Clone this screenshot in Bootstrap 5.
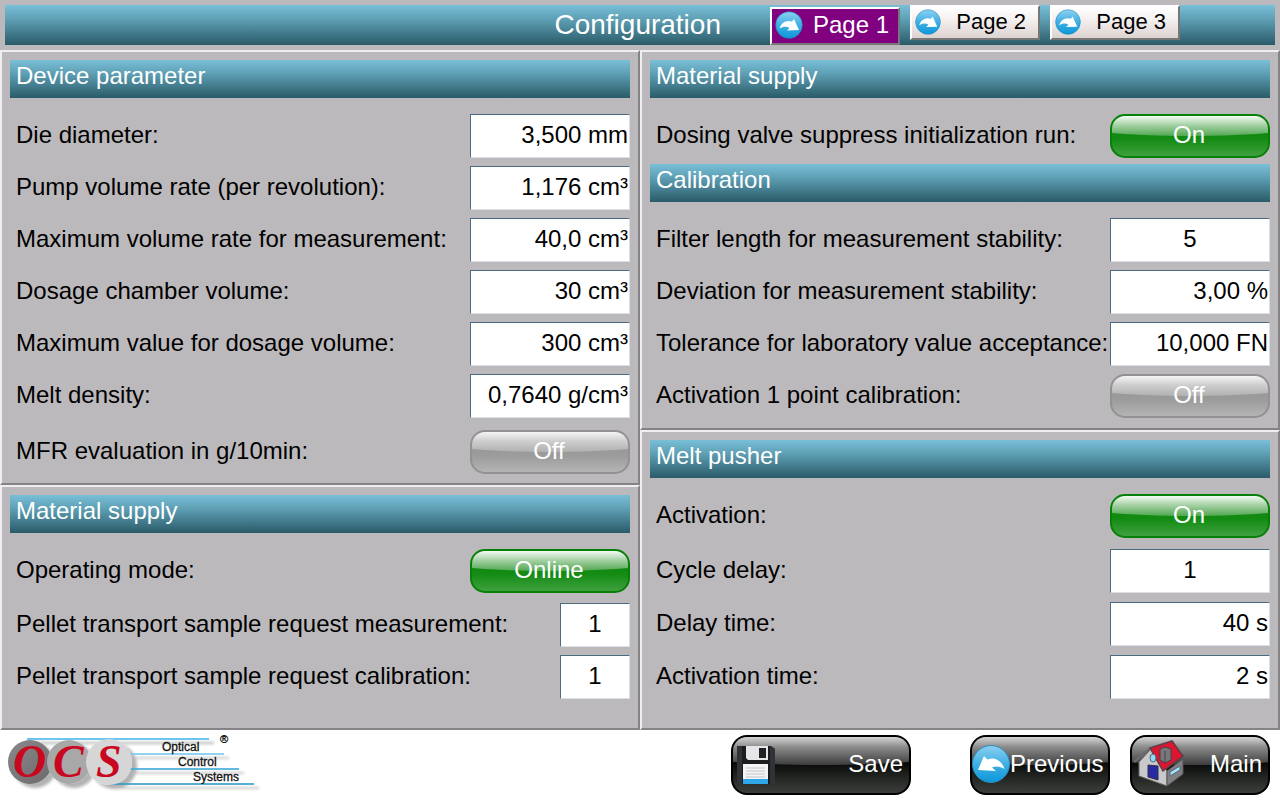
<!DOCTYPE html>
<html lang="en">
<head>
<meta charset="utf-8">
<meta name="viewport" content="width=device-width, initial-scale=1">
<title>Configuration</title>
<link href="https://cdn.jsdelivr.net/npm/bootstrap@5.3.0/dist/css/bootstrap.min.css" rel="stylesheet">
<style>
  body { font-family: "Liberation Sans", Arial, sans-serif; font-size: 24px; line-height: 28px; color: #000; background: #fff; }
  .hmi-top { background: #bcb9bc; padding: 5px 5px 5px; }
  .hmi-bar, .section-bar { background: linear-gradient(#78bfd8, #5fa0b5 35%, #2a5b69); color: #fff; }
  .hmi-bar { height: 40px; gap: 10px; padding-right: 95px; }
  .hmi-title { font-size: 28px; line-height: 40px; margin: 0 39px 0 0; font-weight: 400; }
  .tab-btn { width: 130px; height: 35px; padding: 0 12px 2px 3px; font-size: 22px; line-height: 28px; color: #000; background: linear-gradient(#fff, #f4f0ef 40%, #dcd3d0); border: 2px solid; border-color: #fff #777 #777 #fff; }
  .tab-btn svg { width: 26px; height: 26px; }
  .tab-btn.current { height: 38px; margin-top: 2px; padding-right: 9px; font-size: 24px; color: #fff; background: #800080; }
  .tab-btn.current svg { width: 28px; height: 28px; }
  .hmi-panel { background: #bcb9bc; border: 2px solid; border-color: #f0eef0 #858385 #858385 #f0eef0; padding: 8px 8px 9px; }
  .hmi-panel.tall { padding-bottom: 10px; }
  .section-bar { height: 38px; font-size: 24px; line-height: 32px; padding-left: 6px; margin: 0; font-weight: 400; }
  .section-bar.calib { margin-top: 6px; }
  .param-rows { display: grid; gap: 8px; padding-top: 16px; }
  .param-rows.roomy { gap: 9px; }
  .param { display: flex; align-items: center; justify-content: space-between; height: 44px; }
  .param label { padding: 0 0 2px 6px; white-space: nowrap; }
  .param.after-fields { margin-top: 4px; }
  .param.before-fields { margin-bottom: 2px; }
  .num { width: 160px; height: 44px; flex: none; padding: 0 1px 2px; background: #fff; color: #000; border: 1px solid; border-color: #4c6b82 #dcdfe6 #dcdfe6 #4c6b82; border-radius: 0; text-align: right; }
  .num.short { width: 70px; }
  .num.mid { text-align: center; }
  .glossy { position: relative; isolation: isolate; overflow: hidden; display: flex; align-items: center; color: #fff; flex: none; }
  .glossy::before { content: ""; position: absolute; z-index: -1; inset: 0 -40px auto; height: 50%; border-radius: 0 0 50% 50% / 0 0 12px 12px; }
  .toggle { width: 160px; height: 44px; justify-content: center; padding: 0 2px 2px 0; border: 2px solid #068006; border-radius: 15px; background: linear-gradient(#128a12 45%, #148c14 58%, #3fa03f); }
  .toggle::before { background: linear-gradient(#f4fbf4, #aed6ae 40%, #52a752); }
  .toggle.off { border-color: #929292; background: linear-gradient(#999 45%, #9c9c9c 60%, #b4b4b4); }
  .toggle.off::before { background: linear-gradient(#f6f4f6, #cfcecf 45%, #b0b0b0); }
  .foot { padding: 5px 10px 5px 0; min-height: 70px; }
  .foot-buttons { gap: 20px; }
  .cmd { width: 140px; height: 60px; justify-content: space-between; padding: 0 6px 2px 0; border: 2px solid #000; border-radius: 16px; background: linear-gradient(#0c0e0c 50%, #1c1e1c 65%, #3b3e3b); }
  .cmd::before { background: linear-gradient(#d6d6d6, #8d8d8d 35%, #3c3c3c); }
  .cmd.wide { width: 180px; margin-right: 39px; }
  .cmd svg { flex: none; }
  .ocs-logo { overflow: visible; }
</style>
</head>
<body>
<svg width="0" height="0" class="position-absolute" aria-hidden="true">
  <defs>
    <linearGradient id="blue" x1="0" y1="0" x2="0" y2="1"><stop offset="0" stop-color="#8bd0f0"/><stop offset=".5" stop-color="#3fb0e4"/><stop offset="1" stop-color="#0c97da"/></linearGradient>
    <symbol id="forward" viewBox="0 0 28 28">
      <circle cx="14" cy="14" r="13.3" fill="url(#blue)" stroke="#2287b8" stroke-width=".6"/>
      <path d="M4.500 17.500C6 12 11 8.500 17 10.500L19 8 24 19 12 19.500 14.500 17C11.500 15 8 15.500 4.500 17.500z" fill="#fff"/>
    </symbol>
  </defs>
</svg>
<div class="d-flex flex-column min-vh-100">
  <header class="hmi-top">
    <div class="hmi-bar d-flex justify-content-end align-items-start">
      <h1 class="hmi-title">Configuration</h1>
      <button type="button" class="tab-btn current d-flex align-items-center justify-content-between"><svg aria-hidden="true"><use href="#forward"/></svg>Page 1</button>
      <button type="button" class="tab-btn d-flex align-items-center justify-content-between"><svg aria-hidden="true"><use href="#forward"/></svg>Page 2</button>
      <button type="button" class="tab-btn d-flex align-items-center justify-content-between"><svg aria-hidden="true"><use href="#forward"/></svg>Page 3</button>
    </div>
  </header>

  <main class="row g-0 flex-grow-1">
    <div class="col-6 d-flex flex-column">
      <section class="hmi-panel">
        <h2 class="section-bar">Device parameter</h2>
        <div class="param-rows">
          <div class="param"><label for="die">Die diameter:</label><input id="die" class="num" type="text" value="3,500 mm"></div>
          <div class="param"><label for="pump">Pump volume rate (per revolution):</label><input id="pump" class="num" type="text" value="1,176 cm³"></div>
          <div class="param"><label for="maxrate">Maximum volume rate for measurement:</label><input id="maxrate" class="num" type="text" value="40,0 cm³"></div>
          <div class="param"><label for="chamber">Dosage chamber volume:</label><input id="chamber" class="num" type="text" value="30 cm³"></div>
          <div class="param"><label for="maxdose">Maximum value for dosage volume:</label><input id="maxdose" class="num" type="text" value="300 cm³"></div>
          <div class="param"><label for="density">Melt density:</label><input id="density" class="num" type="text" value="0,7640 g/cm³"></div>
          <div class="param after-fields"><label for="mfr">MFR evaluation in g/10min:</label><button id="mfr" type="button" class="glossy toggle off">Off</button></div>
        </div>
      </section>
      <section class="hmi-panel flex-grow-1">
        <h2 class="section-bar">Material supply</h2>
        <div class="param-rows">
          <div class="param before-fields"><label for="mode">Operating mode:</label><button id="mode" type="button" class="glossy toggle">Online</button></div>
          <div class="param"><label for="reqmeas">Pellet transport sample request measurement:</label><input id="reqmeas" class="num short mid" type="text" value="1"></div>
          <div class="param"><label for="reqcal">Pellet transport sample request calibration:</label><input id="reqcal" class="num short mid" type="text" value="1"></div>
        </div>
      </section>
    </div>
    <div class="col-6 d-flex flex-column">
      <section class="hmi-panel tall">
        <h2 class="section-bar">Material supply</h2>
        <div class="param-rows">
          <div class="param"><label for="dosing">Dosing valve suppress initialization run:</label><button id="dosing" type="button" class="glossy toggle">On</button></div>
        </div>
        <h2 class="section-bar calib">Calibration</h2>
        <div class="param-rows">
          <div class="param"><label for="filter">Filter length for measurement stability:</label><input id="filter" class="num mid" type="text" value="5"></div>
          <div class="param"><label for="deviation">Deviation for measurement stability:</label><input id="deviation" class="num" type="text" value="3,00 %"></div>
          <div class="param"><label for="tolerance">Tolerance for laboratory value acceptance:</label><input id="tolerance" class="num" type="text" value="10,000 FN"></div>
          <div class="param"><label for="onepoint">Activation 1 point calibration:</label><button id="onepoint" type="button" class="glossy toggle off">Off</button></div>
        </div>
      </section>
      <section class="hmi-panel flex-grow-1">
        <h2 class="section-bar">Melt pusher</h2>
        <div class="param-rows roomy">
          <div class="param before-fields"><label for="pusher">Activation:</label><button id="pusher" type="button" class="glossy toggle">On</button></div>
          <div class="param"><label for="cycle">Cycle delay:</label><input id="cycle" class="num mid" type="text" value="1"></div>
          <div class="param"><label for="delay">Delay time:</label><input id="delay" class="num" type="text" value="40 s"></div>
          <div class="param"><label for="acttime">Activation time:</label><input id="acttime" class="num" type="text" value="2 s"></div>
        </div>
      </section>
    </div>
  </main>

  <footer class="foot d-flex justify-content-between align-items-start">
    <svg class="ocs-logo" width="264" height="60" viewBox="0 10 264 60" role="img" aria-label="OCS Optical Control Systems">
      <defs>
        <filter id="soft" filterUnits="userSpaceOnUse" x="0" y="0" width="270" height="75"><feDropShadow dx="5" dy="4" stdDeviation="1.5" flood-color="#000" flood-opacity=".3"/></filter>
        <linearGradient id="dark" x1="0" y1="0" x2="1" y2="1"><stop offset="0" stop-color="#8a888a"/><stop offset="1" stop-color="#6c6a6c"/></linearGradient>
      </defs>
      <g filter="url(#soft)">
        <g stroke-width="1.5"><path d="M27 14H209" stroke="#6cc5ee" stroke-width="2"/><path d="M125 29H224" stroke="#6cc5ee"/><path d="M125 44H239" stroke="#2ba3d6"/><path d="M109 59H254" stroke="#1f94c4"/></g>
        <circle cx="30" cy="37" r="22" fill="url(#dark)"/>
        <circle cx="69" cy="37" r="22" fill="#a9a8a9"/>
        <circle cx="109" cy="37" r="23" fill="#d7d6d7"/>
      </g>
      <g font-family="Liberation Sans, Arial, sans-serif" font-size="12" fill="#111" stroke="#111" stroke-width=".3">
        <text x="162" y="26">Optical</text><text x="178" y="41">Control</text><text x="193" y="56">Systems</text><text x="220" y="18" font-size="11">®</text>
      </g>
      <g font-family="Liberation Serif, Times New Roman, serif" font-size="46" font-weight="700" font-style="italic" fill="#c9081f">
        <text x="13" y="52">O</text><text x="53" y="52">C</text><text x="96" y="52">S</text>
      </g>
    </svg>
    <div class="foot-buttons d-flex">
      <button type="button" class="glossy cmd wide">
        <svg width="46" height="44" viewBox="0 0 46 44" aria-hidden="true">
          <path d="M4 4h34l4 3v35H4z" fill="#1c1d20"/><path d="M4 4h5v38H4zM37 4l5 3v35h-5z" fill="#303236"/>
          <path d="M13 4h22v14H15l-2-2z" fill="#e6e6e9"/><path d="M26 6h7v10h-7z" fill="#202126"/>
          <path d="M10 22h25v16H10z" fill="#f4f4f6"/><path d="M10 37h25v5H10z" fill="#2ea7e8"/>
          <path d="M13 26h19M13 29h19M13 32h19M13 35h19" stroke="#c6c6ca"/>
        </svg>Save</button>
      <button type="button" class="glossy cmd">
        <svg width="38" height="40" viewBox="0 0 38 40" aria-hidden="true">
          <circle cx="19" cy="20" r="18.500" fill="url(#blue)" stroke="#2f8cba"/>
          <path d="M6 26L12 12 15.500 15.500C23 12.500 30 17 32.500 25 28.500 22.500 24 21.500 20 23.500L24 27z" fill="#fff"/>
        </svg>Previous</button>
      <button type="button" class="glossy cmd">
        <svg width="54" height="48" viewBox="0 0 54 48" aria-hidden="true">
          <path d="M7 22L19 9 35 31V46L7 36z" fill="#c9c9cd" stroke="#666"/>
          <path d="M35 31L51 19V34L35 46z" fill="#7f7f84" stroke="#555"/>
          <path d="M2 22L19 8" fill="none" stroke="#6a6a6e" stroke-width="2.500"/>
          <path d="M18 8L40 1 51 16 31 31z" fill="#dc1530" stroke="#5e4046" stroke-width="1.500"/>
          <path d="M28 9l5-2 6 2v11l-6 3-5-3z" fill="#77777c" stroke="#424247"/><path d="M33 11v12" stroke="#444"/>
          <path d="M16 25l10 1v14l-10-3z" fill="#2729a6" stroke="#333"/>
          <ellipse cx="21" cy="18" rx="3" ry="4" fill="#8fdcfa" stroke="#567"/>
          <path d="M38 32l10-6v4l-10 6z" fill="#a4e4fa" stroke="#567"/>
        </svg>Main</button>
    </div>
  </footer>
</div>
<script src="https://cdn.jsdelivr.net/npm/bootstrap@5.3.0/dist/js/bootstrap.bundle.min.js"></script>
</body>
</html>
